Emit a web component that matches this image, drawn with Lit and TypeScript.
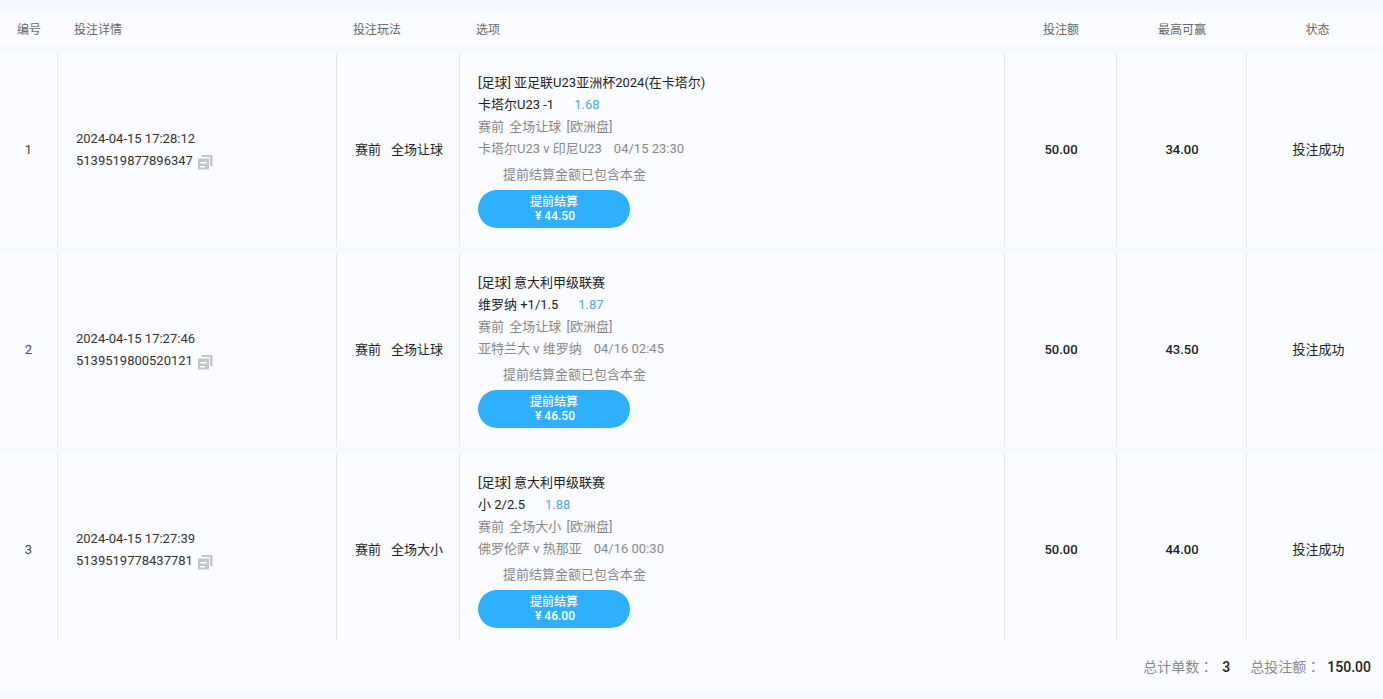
import { LitElement, html, css } from "lit";
import { customElement } from "lit/decorators.js";

interface Row { n: number; time: string; id: string; play: string; league: string; pick: string; odds: string; market: string; match: string; date: string; amt: string; win: string; cash: string; }

const rows: Row[] = [
  { n: 1, time: "2024-04-15 17:28:12", id: "5139519877896347", play: "全场让球", league: "[足球] 亚足联U23亚洲杯2024(在卡塔尔)", pick: "卡塔尔U23 -1", odds: "1.68", market: "赛前 全场让球 [欧洲盘]", match: "卡塔尔U23 v 印尼U23", date: "04/15 23:30", amt: "50.00", win: "34.00", cash: "44.50" },
  { n: 2, time: "2024-04-15 17:27:46", id: "5139519800520121", play: "全场让球", league: "[足球] 意大利甲级联赛", pick: "维罗纳 +1/1.5", odds: "1.87", market: "赛前 全场让球 [欧洲盘]", match: "亚特兰大 v 维罗纳", date: "04/16 02:45", amt: "50.00", win: "43.50", cash: "46.50" },
  { n: 3, time: "2024-04-15 17:27:39", id: "5139519778437781", play: "全场大小", league: "[足球] 意大利甲级联赛", pick: "小 2/2.5", odds: "1.88", market: "赛前 全场大小 [欧洲盘]", match: "佛罗伦萨 v 热那亚", date: "04/16 00:30", amt: "50.00", win: "44.00", cash: "46.00" },
];

@customElement("app-root")
export class AppRoot extends LitElement {
  static styles = css`
    :host { display: block; width: 1383px; height: 699px; overflow: hidden; background: #f5f8ff;
      font-family: Roboto, "Noto Sans CJK SC", sans-serif; font-size: 13px; color: #333; }
    .page { padding-top: 12px; display: flex; flex-direction: column; }
    .grid { display: grid; grid-template-columns: 58px 279px 123px 545px 112px 130px 137px; }
    .head { height: 34px; background: #fbfcff; margin-bottom: 7px; align-items: center; color: #666; font-size: 12px; }
    .head div { line-height: 34px; padding-top: 1px; }
    .h0 { text-align: center; }
    .h1, .h2, .h3 { padding-left: 16px; }
    .hc { text-align: center; }
    .hs { text-align: center; padding-left: 4px; }
    .rows { display: flex; flex-direction: column; gap: 6px; }
    .row { height: 194px; background: #fbfcff; line-height: 22px; }
    .row > div { border-right: 1px solid #e4e6ec; display: flex; align-items: center; }
    .row > div:last-child { border-right: none; }
    .row > div.c { justify-content: center; text-align: center; }
    .last { height: 188px; }
    .last > div { padding-top: 6px; box-sizing: border-box; }
    .idx { color: #444; }
    .detail { padding-left: 18px; }
    .detail p { margin: 0; line-height: 22px; color: #333; }
    .copy { display: inline-block; vertical-align: -5px; margin-left: 1px; width: 16px; height: 16px; }
    .row > div.play { color: #222; gap: 10px; padding-left: 2px; }
    .sel { padding-left: 18px; }
    .sel p { margin: 0; line-height: 22px; }
    .dark { color: #222; }
    .odds { color: #4aa8e8; margin-left: 20px; }
    .gray { color: #888; }
    .market { word-spacing: 2px; }
    .date { margin-left: 12px; }
    .sel p.note { color: #888; padding-left: 25px; margin-top: 4px; }
    .btn { margin-top: 4px; width: 152px; height: 38px; border-radius: 19px; background: #2eb0ff; color: #fff;
      display: flex; flex-direction: column; align-items: center; justify-content: center; font-size: 12px; line-height: 14px; font-weight: 500; }
    .amount { margin-left: 2px; }
    .num { font-weight: 500; color: #222; }
    .row > div.num { padding-left: 1px; }
    .row > div.status { color: #222; padding-left: 6px; }
    .foot { height: 51px; background: #fbfcff; display: flex; align-items: center; justify-content: flex-end; padding-right: 12px; color: #888; font-size: 14px; line-height: 20px; }
    .foot b { font-weight: 500; color: #222; margin-left: 9px; margin-right: 20px; }
    .foot b:last-child { margin-left: 7px; margin-right: 0; }
    .colon { font-family: Roboto, "Noto Sans CJK TC", sans-serif; }
  `;

  private icon() {
    return html`<svg class="copy" viewBox="0 0 16 16"><path d="M4.500 1H15.500V12H13V3H4.500z" fill="#c4c4c4"/><path d="M1 4.500h11V15.500H1z" fill="#c4c4c4"/><path d="M3 8h7v1.400H3zM3 12h5v1.400H3z" fill="#fbfcff"/></svg>`;
  }

  render() {
    return html`<div class="page">
      <div class="grid head">
        <div class="h0">编号</div><div class="h1">投注详情</div><div class="h2">投注玩法</div><div class="h3">选项</div>
        <div class="hc">投注额</div><div class="hc">最高可赢</div><div class="hs">状态</div>
      </div>
      <div class="rows">
        ${rows.map((r, i) => html`<div class="grid row ${i === 2 ? "last" : ""}">
          <div class="c idx">${r.n}</div>
          <div class="detail"><div><p>${r.time}</p><p>${r.id} ${this.icon()}</p></div></div>
          <div class="c play"><span>赛前</span><span>${r.play}</span></div>
          <div class="sel"><div>
            <p class="dark">${r.league}</p>
            <p class="dark">${r.pick}<span class="odds">${r.odds}</span></p>
            <p class="gray market">${r.market}</p>
            <p class="gray">${r.match}<span class="date">${r.date}</span></p>
            <p class="note">提前结算金额已包含本金</p>
            <div class="btn"><span>提前结算</span><span class="amount">¥ ${r.cash}</span></div>
          </div></div>
          <div class="c num">${r.amt}</div>
          <div class="c num">${r.win}</div>
          <div class="c status">投注成功</div>
        </div>`)}
      </div>
      <div class="foot"><span>总计单数<span class="colon">：</span></span><b>3</b><span>总投注额<span class="colon">：</span></span><b>150.00</b></div>
    </div>`;
  }
}
